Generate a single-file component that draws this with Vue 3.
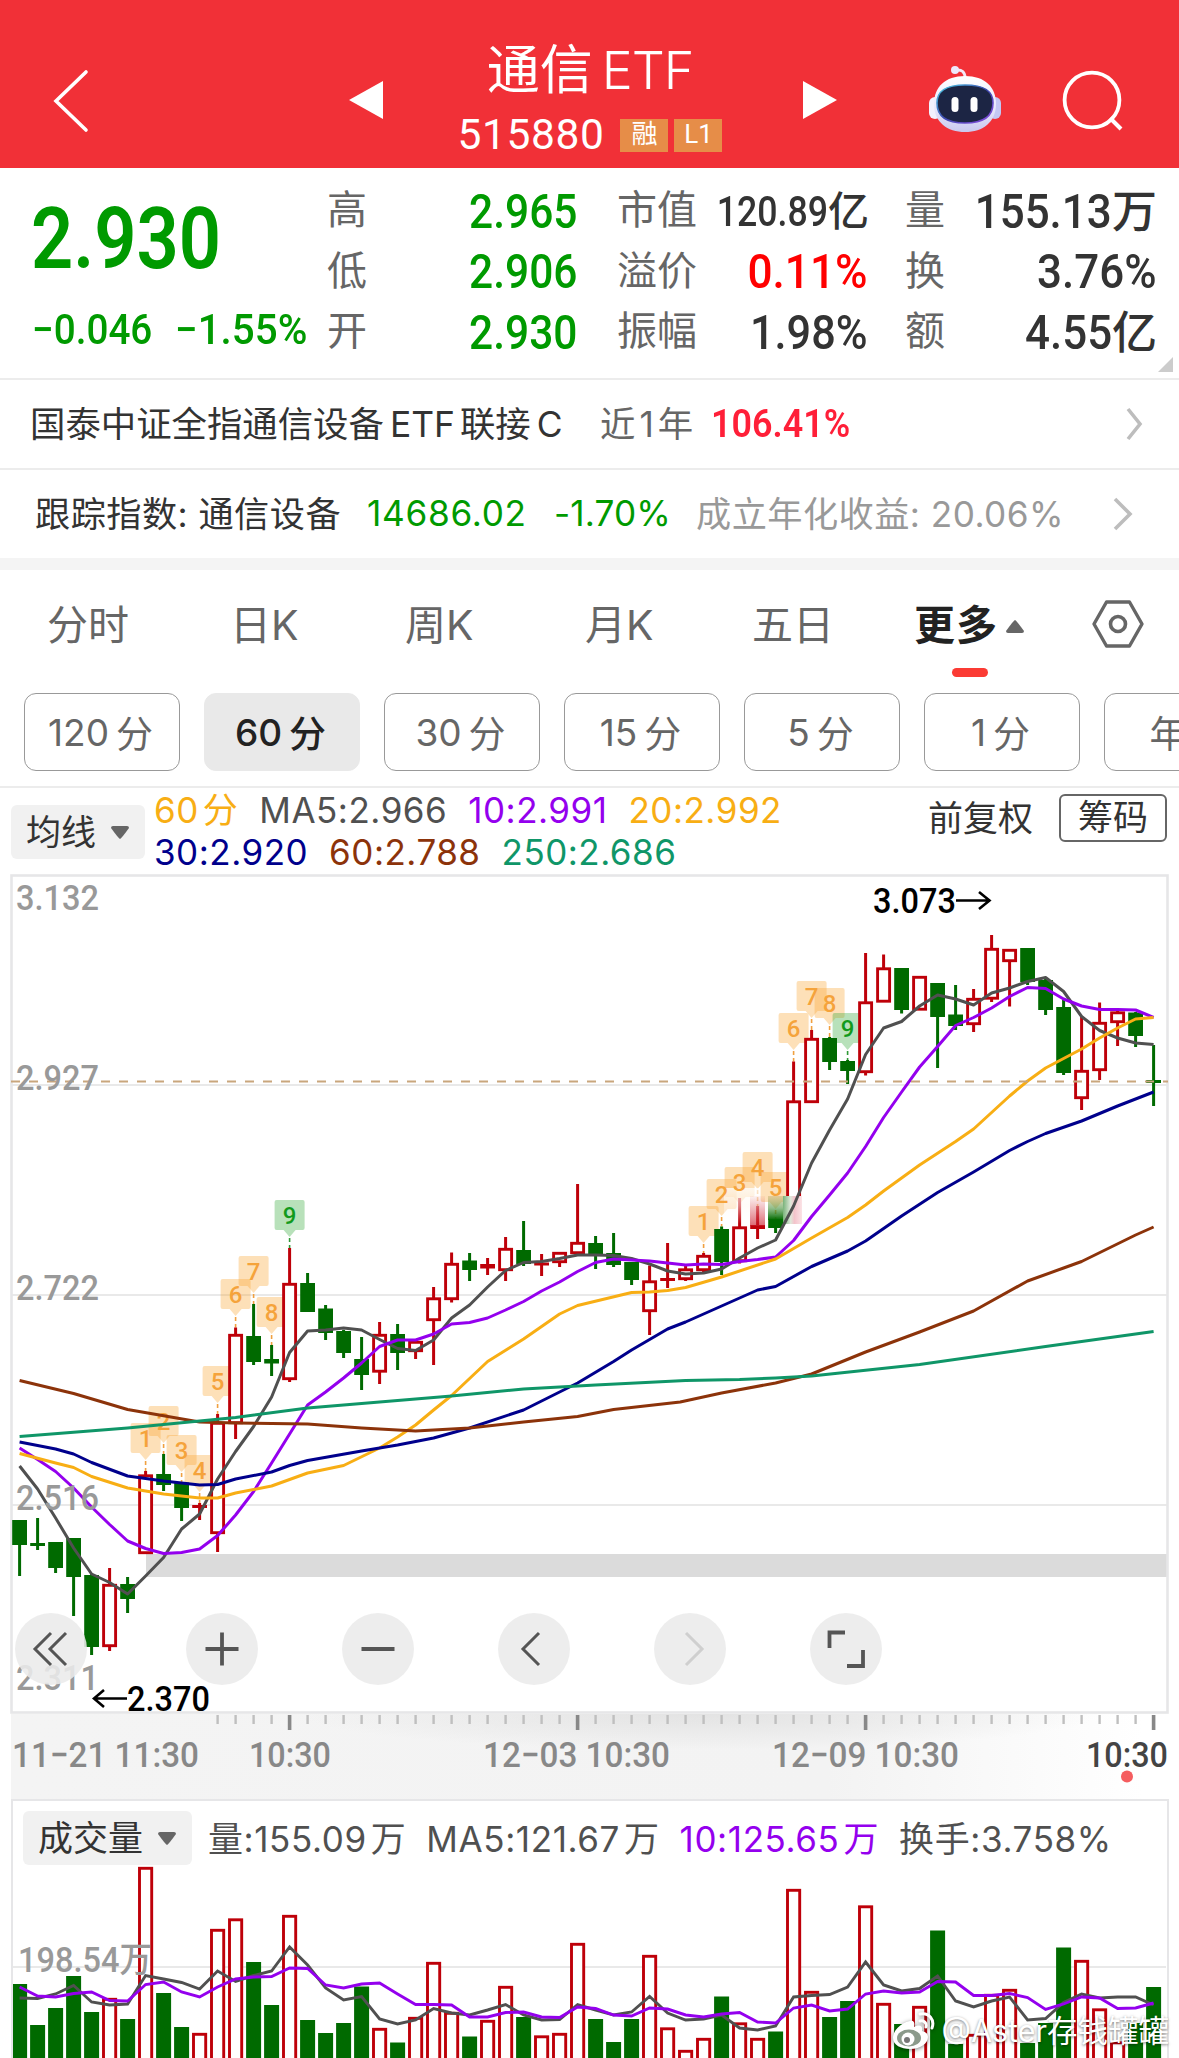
<template>
  <div class="page">
    <header class="header">
      <svg class="back" viewBox="0 0 36 64" width="36" height="64">
        <path d="M33 3 L3 32 L33 61" fill="none" stroke="#fff" stroke-width="3.6" stroke-linecap="round" />
      </svg>
      <svg class="prev" viewBox="0 0 34 38" width="34" height="38"><path d="M34 0 V38 L0 19Z" fill="#fff" /></svg>
      <div class="title">
        <div class="name">通信<span>ETF</span></div>
        <div class="code">
          <span>515880</span>
          <i class="tag">融</i>
          <i class="tag">L1</i>
        </div>
      </div>
      <svg class="next" viewBox="0 0 34 38" width="34" height="38"><path d="M0 0 V38 L34 19Z" fill="#fff" /></svg>
      <svg class="robot" viewBox="0 0 74 68" width="74" height="68">
        <defs>
          <linearGradient id="shell" x1="0" y1="0" x2="0" y2="1">
            <stop offset="0" stop-color="#ffffff" />
            <stop offset="0.6" stop-color="#e6e6fb" />
            <stop offset="1" stop-color="#c9c8ee" />
          </linearGradient>
          <linearGradient id="rim" x1="0" y1="0" x2="1" y2="1">
            <stop offset="0" stop-color="#4fd2e8" />
            <stop offset="0.5" stop-color="#3c49b0" />
            <stop offset="1" stop-color="#8b4be0" />
          </linearGradient>
        </defs>
        <rect x="1" y="32" width="12" height="22" rx="6" fill="#f2f1fd" />
        <rect x="61" y="32" width="12" height="22" rx="6" fill="#c3c7f4" />
        <path d="M28 5 Q37 4 37 13" fill="none" stroke="#f3e9f7" stroke-width="3" />
        <circle cx="27" cy="5" r="4" fill="#eee8fb" />
        <path d="M37 11 C57 11 68 22 68 39 C68 57 55 67 37 67 C19 67 6 57 6 39 C6 22 17 11 37 11Z" fill="url(#shell)" />
        <path d="M37 20 C57 20 65 26 65 38 C65 52 55 58 37 58 C19 58 9 52 9 38 C9 26 17 20 37 20Z" fill="#1c2544" stroke="url(#rim)" stroke-width="1.6" />
        <rect x="23.500" y="32" width="7" height="15" rx="3.500" fill="#fff" />
        <rect x="42.500" y="32" width="7" height="15" rx="3.500" fill="#fff" />
      </svg>
      <svg class="search" viewBox="0 0 62 62" width="62" height="62">
        <circle cx="30" cy="30" r="27.400" fill="none" stroke="#fff" stroke-width="3.800" />
        <path d="M48 48 L59 59" stroke="#fff" stroke-width="4" />
      </svg>
    </header>

    <section class="quote">
      <div class="last">
        <div class="price"><span class="din left">2.930</span></div>
        <div class="change">
          <span class="din left">−0.046</span>
          <span class="din left">−1.55%</span>
        </div>
      </div>
      <div v-for="(col, c) in quotes" :key="c" class="col" :class="'col' + c">
        <div v-for="q in col" :key="q.label" class="cell">
          <span class="label">{{ q.label }}</span>
          <span class="value" :class="q.cls"><span class="din">{{ q.value }}</span><b v-if="q.unit">{{ q.unit }}</b></span>
        </div>
      </div>
      <svg class="corner" viewBox="0 0 15 15" width="15" height="15"><path d="M15 0 V15 H0Z" fill="#ccc" /></svg>
    </section>

    <section class="link">
      <span class="fund">国泰中证全指通信设备<em>ETF</em>联接<em>C</em></span>
      <span class="near">近<em>1</em>年</span>
      <span class="rate"><span class="din left">106.41%</span></span>
      <svg class="arrow" viewBox="0 0 18 34" width="18" height="34"><path d="M2 2 L14 17 L2 32" /></svg>
    </section>

    <section class="link index">
      <span class="track">跟踪指数: 通信设备</span>
      <span class="green point">14686.02</span>
      <span class="green pct">-1.70%</span>
      <span class="since">成立年化收益: 20.06%</span>
      <svg class="arrow" viewBox="0 0 20 34" width="20" height="34"><path d="M2 2 L17 17 L2 32" /></svg>
    </section>

    <nav class="tabs">
      <span v-for="t in tabs" :key="t" class="tab">{{ t }}</span>
      <span class="tab active">更多<svg viewBox="0 0 18 13" width="18" height="13"><path d="M9 0 Q10 0 18 11 Q18 13 16 13 H2 Q0 13 0 11 Q8 0 9 0Z" fill="#666" /></svg></span>
      <svg class="gear" viewBox="0 0 52 48" width="52" height="48">
        <path d="M14.500 2 H37.500 L50 24 L37.500 46 H14.500 L2 24Z" fill="none" stroke="#666" stroke-width="3.400" stroke-linejoin="round" />
        <circle cx="26" cy="24" r="7.500" fill="none" stroke="#666" stroke-width="3.600" />
      </svg>
    </nav>

    <div class="chips">
      <span v-for="p in periods" :key="p.n + p.unit" class="chip" :class="{ on: p.n === '60' }">
        <span v-if="p.n">{{ p.n }}</span>{{ p.unit }}
      </span>
    </div>

    <section class="ma-bar">
      <div class="select">均线<svg viewBox="0 0 18 13" width="18" height="13"><path :d="caret" fill="#666" /></svg></div>
      <div class="legend">
        <div>
          <span class="orange">60<i>分</i></span>
          <span class="gray">MA5:2.966</span>
          <span class="purple">10:2.991</span>
          <span class="orange">20:2.992</span>
        </div>
        <div>
          <span class="blue">30:2.920</span>
          <span class="brown">60:2.788</span>
          <span class="teal">250:2.686</span>
        </div>
      </div>
      <span class="adjust">前复权</span>
      <span class="chouma">筹码</span>
    </section>

    <section class="kline">
      <svg viewBox="0 873 1179 926" width="1179" height="926">
        <defs>
          <linearGradient id="strip" x1="0" x2="1">
            <stop offset="0" stop-color="#f4f4f4" />
            <stop offset="0.7" stop-color="#f3f3f3" />
            <stop offset="0.97" stop-color="#fff" />
          </linearGradient>
          <radialGradient id="shade" cx="0.5" cy="0" r="0.5" gradientTransform="translate(0 0) scale(1 1.2)">
            <stop offset="0" stop-color="#dcdcdc" stop-opacity="0.7" />
            <stop offset="1" stop-color="#dcdcdc" stop-opacity="0" />
          </radialGradient>
          <linearGradient id="fade" x1="0" x2="0" y1="0" y2="1">
            <stop offset="0" stop-color="#fff" stop-opacity="0.75" />
            <stop offset="0.5" stop-color="#fff8f2" stop-opacity="0.5" />
            <stop offset="1" stop-color="#fff" stop-opacity="0" />
          </linearGradient>
          <linearGradient id="redFade" x1="0" x2="0" y1="0" y2="1">
            <stop offset="0" stop-color="#d03040" stop-opacity="0.05" />
            <stop offset="1" stop-color="#c81828" stop-opacity="0.65" />
          </linearGradient>
          <linearGradient id="greenFade" x1="0" x2="0" y1="0" y2="1">
            <stop offset="0" stop-color="#b9a860" stop-opacity="0.4" />
            <stop offset="0.5" stop-color="#4a9440" stop-opacity="0.6" />
            <stop offset="1" stop-color="#006a00" />
          </linearGradient>
          <linearGradient id="smear" x1="0" x2="1">
            <stop offset="0" stop-color="#79b37a" />
            <stop offset="0.4" stop-color="#dfe8da" />
            <stop offset="0.6" stop-color="#f3c3cb" />
            <stop offset="1" stop-color="#fbe3e6" />
          </linearGradient>
        </defs>

        <path d="M12 1085H1167M12 1295H1167M12 1505H1167" stroke="#e9e9e9" stroke-width="2" />
        <rect x="146" y="1554" width="1021" height="23" fill="#dbdbdb" />
        <rect x="11.500" y="875.500" width="1156" height="837" fill="none" stroke="#e6e6e8" stroke-width="2.600" />

        <g v-for="b in badges" :key="'b' + b.i">
          <path :d="badgePath(b)" :fill="b.n === 9 ? '#2fa836' : '#f9a32e'" fill-opacity="0.34" />
          <line :x1="x(b.i)" :x2="x(b.i)" :y1="b.y + 38" :y2="candles[b.i][3]" :stroke="b.n === 9 ? '#2f9a36' : '#f0a040'" stroke-width="1.600" stroke-dasharray="4 3" />
        </g>

        <g v-for="(c, i) in candles" :key="i">
          <line :x1="x(i)" :x2="x(i)" :y1="c[3]" :y2="c[4]" :stroke="color(c)" stroke-width="3" />
          <rect v-if="c[0] === 'r' && c[2] - c[1] > 5" :x="x(i) - 6" :y="c[1] + 1.300" width="12" :height="c[2] - c[1] - 2.600" fill="#fff" :stroke="color(c)" stroke-width="2.900" />
          <rect v-else :x="x(i) - 7.400" :y="c[1]" width="14.800" :height="c[2] - c[1]" :fill="color(c)" />
        </g>

        <rect x="724" y="1188" width="36" height="36" fill="url(#fade)" />
        <rect x="750" y="1196" width="15" height="30" fill="url(#redFade)" />
        <rect x="768" y="1196" width="15" height="24" fill="url(#greenFade)" />
        <rect x="783" y="1196" width="19" height="28" fill="url(#smear)" />

        <text v-for="b in badges" :key="'t' + b.i" :x="x(b.i)" :y="b.y + 24" class="badge-no" :fill="b.n === 9 ? '#129a1c' : '#f5a33b'">{{ b.n }}</text>

        <polyline v-for="l in lines" :key="l.color" :points="linePoints(l.pts)" fill="none" :stroke="l.color" stroke-width="3" stroke-linejoin="round" />
        <line x1="11" x2="1168" y1="1081.500" y2="1081.500" stroke="#c9a67c" stroke-width="1.800" stroke-dasharray="9 9" />

        <text v-for="a in axis" :key="a[0]" x="16" :y="a[1]" class="num" textLength="83" lengthAdjust="spacingAndGlyphs">{{ a[0] }}</text>

        <text x="873" y="912.500" class="num black" textLength="83" lengthAdjust="spacingAndGlyphs">3.073</text>
        <path d="M956 900.500H989M979 892L989.500 900.500L979 909" class="mark" />
        <text x="127" y="1711" class="num black" textLength="83" lengthAdjust="spacingAndGlyphs">2.370</text>
        <path d="M127 1698.500H95M104 1690L94 1698.500L104 1707" class="mark" />

        <rect x="11" y="1714" width="1168" height="85" fill="url(#strip)" />
        <rect x="300" y="1714" width="800" height="60" fill="url(#shade)" />
        <line v-for="i in 53" :key="'k' + i" :x1="x(i + 10)" :x2="x(i + 10)" y1="1715" :y2="isMajor(i + 10) ? 1730 : 1724" :stroke="isMajor(i + 10) ? '#888' : '#bfbfbf'" :stroke-width="isMajor(i + 10) ? 3.600 : 2.400" />
        <text v-for="t in times" :key="t.x" :x="t.x" y="1767" class="num time" :class="{ now: t.now }" :textLength="t.w" lengthAdjust="spacingAndGlyphs">{{ t.text }}</text>
        <circle cx="1127" cy="1776.500" r="6" fill="#f55d5f" />
      </svg>
      <div class="tools">
        <span class="tool first"><svg viewBox="0 0 40 40"><path d="M20 4 L4 20 L20 36M35 4 L19 20 L35 36" /></svg></span>
        <span class="tool"><svg viewBox="0 0 40 40"><path class="thick" d="M3.500 20H36.500M20 3.500V36.500" /></svg></span>
        <span class="tool"><svg viewBox="0 0 40 40"><path class="thick" d="M3.500 20H36.500" /></svg></span>
        <span class="tool"><svg viewBox="0 0 40 40"><path d="M25 4 L9 20 L25 36" /></svg></span>
        <span class="tool off"><svg viewBox="0 0 40 40"><path d="M16 4 L32 20 L16 36" /></svg></span>
        <span class="tool"><svg viewBox="0 0 40 40"><path class="thick" d="M19 3.500H3.500V19M37 21V37H21" /></svg></span>
      </div>
    </section>

    <section class="volume">
      <div class="vol-head">
        <div class="select">成交量<svg viewBox="0 0 18 13" width="18" height="13"><path :d="caret" fill="#666" /></svg></div>
        <span class="gray">量:155.09<i>万</i></span>
        <span class="gray">MA5:121.67<i>万</i></span>
        <span class="purple">10:125.65<i>万</i></span>
        <span class="gray">换手:3.758%</span>
      </div>
      <svg class="bars" viewBox="13 1866 1153 192" width="1153" height="192">
        <path d="M12 1967H1167" stroke="#e9e9e9" stroke-width="2" />
        <g v-for="(v, i) in volumes" :key="i">
          <rect v-if="volRed(i)" :x="x(i) - 6.100" :y="v + 1.300" width="12.200" height="240" fill="#fff" stroke="#be0009" stroke-width="2.900" />
          <rect v-else :x="x(i) - 7.500" :y="v" width="15" height="240" fill="#006a00" />
        </g>
        <text x="18" y="1972" class="num" textLength="134" lengthAdjust="spacingAndGlyphs">198.54万</text>
        <polyline :points="series(volMa5)" fill="none" stroke="#505050" stroke-width="2.900" />
        <polyline :points="series(volMa10)" fill="none" stroke="#9400ee" stroke-width="2.900" />
      </svg>
      <div class="watermark">
        <svg viewBox="0 0 44 38" width="44" height="38">
          <path d="M18 9 C8 11 1 19 1 26 C1 33 9 37 18 37 C29 37 36 31 36 25 C36 21 33 20 30 19 C31 14 28 12 22 15 C23 11 22 8 18 9Z" fill="#fff" />
          <ellipse cx="17" cy="26" rx="12" ry="8.500" fill="#8b9a8b" />
          <circle cx="16" cy="27" r="6.500" fill="#fff" />
          <circle cx="15" cy="28" r="3" fill="#777" />
          <path d="M28 2 C37 0 43 8 40 16M28 9 C32 8 35 11 34 15" fill="none" stroke="#fff" stroke-width="3" stroke-linecap="round" />
        </svg>
        <span>@Aster存钱罐罐</span>
      </div>
    </section>
  </div>
</template>

<script setup>
const quotes = [
  [
    { label: '高', value: '2.965', cls: 'green' },
    { label: '低', value: '2.906', cls: 'green' },
    { label: '开', value: '2.930', cls: 'green' }
  ],
  [
    { label: '市值', value: '120.89', unit: '亿', cls: 'small' },
    { label: '溢价', value: '0.11%', cls: 'red' },
    { label: '振幅', value: '1.98%' }
  ],
  [
    { label: '量', value: '155.13', unit: '万' },
    { label: '换', value: '3.76%' },
    { label: '额', value: '4.55', unit: '亿' }
  ]
]

const tabs = ['分时', '日K', '周K', '月K', '五日']

const periods = [
  { n: '120', unit: '分' },
  { n: '60', unit: '分' },
  { n: '30', unit: '分' },
  { n: '15', unit: '分' },
  { n: '5', unit: '分' },
  { n: '1', unit: '分' },
  { n: '', unit: '年K' }
]

const caret = 'M2 0H16Q18 0 18 2Q10 13 9 13Q8 13 0 2Q0 0 2 0Z'

// type, body top, body bottom, high, low
const candles = [
  ['g', 1520, 1545, 1520, 1576], ['g', 1543, 1546, 1518, 1550], ['g', 1542, 1568, 1542, 1573], ['g', 1538, 1577, 1538, 1616],
  ['g', 1575, 1647, 1574, 1655], ['r', 1584, 1647, 1568, 1651], ['g', 1584, 1599, 1577, 1613], ['r', 1474.5, 1554, 1471, 1554],
  ['g', 1474, 1485, 1454, 1491], ['g', 1482.5, 1508, 1482, 1521], ['r', 1505, 1508, 1503, 1520], ['r', 1422, 1534, 1414, 1552],
  ['r', 1334, 1424, 1327.5, 1439], ['g', 1336, 1362, 1304, 1365], ['g', 1359, 1363.5, 1345, 1376], ['r', 1283, 1380, 1248, 1382],
  ['g', 1283, 1312, 1273, 1312], ['g', 1308.5, 1333, 1305, 1340], ['g', 1331, 1353, 1330, 1358], ['g', 1359, 1375, 1337, 1390],
  ['r', 1334, 1372.5, 1322, 1384], ['g', 1334, 1353, 1324, 1370], ['r', 1341, 1352, 1341, 1359], ['r', 1297.5, 1321, 1287, 1365],
  ['r', 1263, 1300, 1252.5, 1302.5], ['g', 1260.5, 1270, 1253, 1281], ['r', 1264, 1268.5, 1258, 1275], ['r', 1248, 1271, 1237, 1281],
  ['g', 1250, 1264, 1221, 1266], ['r', 1262.5, 1265.5, 1254, 1276], ['r', 1252, 1263, 1252, 1267], ['r', 1242, 1254, 1184, 1254],
  ['g', 1243, 1254, 1236, 1269], ['g', 1253, 1265, 1233, 1267], ['g', 1262, 1280, 1262, 1285], ['r', 1280.5, 1312, 1265.5, 1335],
  ['r', 1278, 1281, 1243, 1288], ['r', 1268.5, 1280, 1266, 1281], ['r', 1255, 1271, 1253, 1272], ['g', 1229, 1262, 1226.5, 1275],
  ['r', 1226.5, 1262, 1198, 1263.5], ['r', 1225, 1229, 1206, 1239], ['g', 1219, 1228, 1219, 1233], ['r', 1100.5, 1223, 1061.5, 1200],
  ['r', 1038, 1103, 1030, 1103], ['g', 1038, 1062, 1037, 1070], ['g', 1061, 1071, 1060, 1084], ['r', 1001.5, 1073, 953, 1075.5],
  ['r', 967.5, 1002.5, 954.5, 1002], ['g', 968, 1010, 968, 1013.5], ['r', 976, 1010.5, 976, 1010], ['g', 983, 1017, 983, 1068],
  ['g', 1014.5, 1026, 985, 1030], ['r', 998, 1025, 989, 1032], ['r', 948, 999.5, 935, 1002], ['r', 949, 962, 949, 1006.5],
  ['g', 948, 982, 948, 985], ['g', 980, 1010, 978, 1015], ['g', 1007, 1073, 1000, 1075], ['r', 1070, 1099, 1016, 1110],
  ['r', 1022, 1071, 1002.5, 1080], ['r', 1011.5, 1023, 1010, 1046], ['g', 1012.5, 1036, 1012, 1047], ['g', 1080, 1083, 1045, 1106]
]

const badges = [
  { i: 7, n: 1, y: 1423 }, { i: 8, n: 2, y: 1406 }, { i: 9, n: 3, y: 1435 }, { i: 10, n: 4, y: 1455 },
  { i: 11, n: 5, y: 1366 }, { i: 12, n: 6, y: 1279 }, { i: 13, n: 7, y: 1256 }, { i: 14, n: 8, y: 1297 },
  { i: 15, n: 9, y: 1200 },
  { i: 38, n: 1, y: 1206 }, { i: 39, n: 2, y: 1179 }, { i: 40, n: 3, y: 1167 }, { i: 41, n: 4, y: 1152 },
  { i: 42, n: 5, y: 1172 }, { i: 43, n: 6, y: 1013 }, { i: 44, n: 7, y: 981 }, { i: 45, n: 8, y: 988 },
  { i: 46, n: 9, y: 1013 }
]

const ma5 = [
  1466, 1489, 1518, 1548, 1574, 1582.5, 1594, 1576, 1557.5, 1529, 1514, 1479, 1451.5, 1426.5, 1397, 1352.5,
  1331, 1330, 1328, 1330, 1339.5, 1348.5, 1350.5, 1340, 1318, 1305, 1287, 1270.5, 1262.5, 1261.5, 1258.5, 1255,
  1255, 1255.5, 1258.5, 1264, 1271, 1274, 1273, 1269, 1258, 1248, 1240, 1206, 1163, 1130, 1099, 1054.5,
  1028, 1021.5, 1006, 995, 999, 1005, 993, 988, 981.5, 977.5, 991.5, 1016.5, 1030.5, 1038, 1043, 1044.5
]

const ma10 = [
  1448, 1459.5, 1471.5, 1488, 1507, 1524.5, 1541, 1548.5, 1553.5, 1552.5, 1549, 1535.5, 1515, 1491.5, 1463, 1434,
  1405, 1392, 1378, 1363, 1346.5, 1340, 1340, 1334, 1324, 1322.5, 1318, 1310, 1301.5, 1291, 1282, 1271.5,
  1262.5, 1259, 1260, 1261, 1263, 1265, 1264, 1264.5, 1261.5, 1259.5, 1257, 1240.5, 1216.5, 1195, 1173, 1146.5,
  1117.5, 1092, 1067, 1046.5, 1025.5, 1017.5, 1008, 996.5, 987.5, 988.5, 999, 1006, 1009.5, 1009.5, 1010, 1017.5
]

const lines = [
  { color: '#505050', pts: ma5.map((y, i) => [i, y]) },
  { color: '#9400ee', pts: ma10.map((y, i) => [i, y]) },
  {
    color: '#f8ae14',
    pts: [[0, 1453.5], [2, 1463], [3, 1467.5], [4, 1476.5], [6, 1488], [8, 1494], [10, 1498], [11, 1498], [12, 1493], [14, 1486],
      [16, 1473], [18, 1465.5], [20, 1448], [21, 1437], [22, 1425], [23, 1410], [24, 1395.5], [26, 1361.5], [28, 1339], [30, 1314],
      [31, 1305.5], [34, 1292.5], [35, 1292], [36, 1290.5], [37, 1287.5], [39, 1277], [42, 1259], [44, 1238], [46, 1217.5], [47, 1205],
      [48, 1191], [50, 1165], [52, 1141.5], [53, 1129], [55, 1096], [56, 1081], [57, 1068], [59, 1049], [60, 1038], [61, 1028],
      [62, 1019], [63, 1017.5]]
  },
  {
    color: '#00008c',
    pts: [[0, 1442], [2, 1449], [3, 1454], [4, 1462.5], [6, 1476], [8, 1481], [10, 1485], [11, 1484.5], [12, 1479], [14, 1472],
      [15, 1465.5], [16, 1460.5], [19, 1451], [21, 1445], [23, 1438], [25, 1428], [28, 1410], [29, 1401], [31, 1383], [33, 1361.5],
      [34, 1350], [36, 1329], [37, 1322], [39, 1306], [41, 1290], [42, 1286.5], [44, 1266.5], [46, 1251], [47, 1241], [49, 1216],
      [51, 1192.5], [53, 1172], [55, 1150.5], [56, 1141.5], [57, 1133.5], [59, 1121], [61, 1106], [63, 1092]]
  },
  {
    color: '#8c330a',
    pts: [[0, 1380.5], [3, 1393.5], [6, 1409.5], [10, 1422], [12, 1423], [16, 1424], [19, 1428], [22, 1431], [25, 1428], [28, 1422],
      [31, 1416.5], [33, 1409.5], [36.7, 1402], [39, 1393], [42, 1383], [44, 1374], [47, 1352], [50, 1332], [53, 1311], [56, 1281],
      [58, 1268], [59, 1261.5], [62, 1235], [63, 1227]]
  },
  {
    color: '#0f9668',
    pts: [[0, 1436.5], [6, 1428], [12, 1417.5], [16, 1408], [21, 1400.5], [24, 1396], [28, 1389], [32, 1385], [37, 1380.5], [40, 1379.5],
      [42, 1378], [44, 1376], [50, 1364.5], [57, 1346.5], [63, 1331.5]]
  }
]

const axis = [['3.132', 910], ['2.927', 1090], ['2.722', 1300], ['2.516', 1510], ['2.311', 1690]]

const times = [
  { text: '11−21 11:30', x: 12, w: 187 },
  { text: '10:30', x: 249, w: 82 },
  { text: '12−03 10:30', x: 483, w: 187 },
  { text: '12−09 10:30', x: 772, w: 187 },
  { text: '10:30', x: 1086, w: 82, now: true }
]

const volumes = [
  1984, 2025, 2008, 1976, 2012, 1998, 2019, 1867, 1993, 2027, 2033, 1929, 1918.5, 1962, 2005, 1915,
  2020, 2033, 2023, 1986.5, 2028, 2042.5, 2017, 1962, 2012, 2036.5, 2020, 1986, 2017, 2035.5, 2033, 1943,
  2019, 2042, 2019, 1955, 2027.5, 2050, 2038, 1996.5, 2022.5, 2038, 2031.5, 1889, 1991, 2017, 2001, 1905.5,
  2003, 2024, 2006, 1930.5, 2044, 2034, 1994, 1989, 2043, 2023, 1947.5, 1960, 2008.5, 2041.5, 2023, 1987
]

const volMa5 = [
  1998, 1998.5, 1994, 1985.5, 2002, 2005, 2004, 1975.5, 1979, 1982.5, 1989, 1971, 1981.5, 1975.5, 1971, 1947,
  1965, 1988, 2000, 1996.5, 2019, 2024, 2020, 2008.5, 2013, 2015, 2010, 2004.5, 2015, 2020, 2019.5, 2004.5,
  2010, 2015, 2012, 1996.5, 2013, 2020, 2019, 2015, 2028, 2030, 2026, 1997, 1995.5, 1994.5, 1987, 1962,
  1985, 1991, 1988.5, 1976, 2001, 2007, 2001, 1997, 2020, 2018.5, 2002.5, 1994, 1998, 1997, 1997, 2005
]

const volMa10 = [
  1987, 1996, 1997, 1993.5, 1992, 2000.5, 2001, 1984.5, 1982, 1992, 1997, 1987, 1979, 1977, 1976.5, 1968,
  1968.5, 1985, 1988, 1984, 1983, 1994, 2004.5, 2004.5, 2005, 2017, 2017, 2012.5, 2012, 2017, 2017.5, 2007,
  2008.5, 2015, 2016, 2008, 2009, 2015, 2017, 2014, 2012.5, 2022, 2023, 2008, 2005, 2011, 2009, 1994,
  1991, 1993, 1992, 1981.5, 1982, 1995.5, 1995.5, 1993.5, 1997.5, 2009.5, 2004, 1997, 1998, 2008.5, 2008, 2003
]

const x = (i) => 19.6 + i * 18
const color = (c) => (c[0] === 'r' ? '#be0009' : '#006a00')
const volRed = (i) => candles[i][0] === 'r'
const isMajor = (i) => i % 16 === 15
const linePoints = (pts) => pts.map(([i, y]) => `${x(i)},${y}`).join(' ')
const series = (ys) => linePoints(ys.map((y, i) => [i, y]))

const badgePath = ({ i, y }) => {
  const l = x(i) - 15
  return `M${l + 2} ${y}h26q2 0 2 2v26q0 2 -2 2h-7l-6 7l-6 -7h-7q-2 0 -2 -2v-26q0 -2 2 -2z`
}
</script>

<style>
body {
  background: #fff;
}
</style>

<style scoped>
.page {
  width: 1179px;
  height: 2058px;
  overflow: hidden;
  font-family: Inter, "Noto Sans CJK SC", sans-serif;
  color: #333;
}

i,
em {
  font-style: normal;
}

.header {
  height: 168px;
  background: #f13037;
  display: flex;
  align-items: center;
}

.back {
  margin: 34px 0 0 53px;
}

.prev {
  margin: 32px 0 0 260px;
}

.title {
  width: 320px;
  margin: 30px 53px 0 47px;
  color: #fff;
  text-align: center;
}

.name {
  font-size: 53px;
  line-height: 70px;
}

.name span {
  margin-left: 9px;
  font-size: 52px;
  letter-spacing: -1px;
  font-weight: 350;
}

.code {
  display: flex;
  align-items: center;
  justify-content: center;
  height: 58px;
  font-family: Roboto, sans-serif;
  font-size: 42.500px;
}

.code span {
  margin-right: 10px;
  font-weight: 400;
  letter-spacing: 0.600px;
}

.tag {
  width: 48px;
  height: 33px;
  margin: 2px 0 0 6px;
  background: #e68d48;
  font-family: Roboto, "Noto Sans CJK SC", sans-serif;
  font-size: 26px;
  line-height: 30px;
}

.next {
  margin-top: 32px;
}

.robot {
  margin: 30px 0 0 91px;
}

.search {
  margin: 34px 0 0 60px;
}

.din {
  display: inline-block;
  font-family: Roboto, sans-serif;
  font-weight: 500;
  transform: scaleX(0.9);
  transform-origin: right center;
}

.din.left {
  transform-origin: left center;
}

.green {
  color: #009a00;
}

.quote {
  position: relative;
  height: 210px;
  border-bottom: 2px solid #ececec;
  display: flex;
  box-sizing: content-box;
}

.last {
  width: 327px;
  color: #009a00;
}

.price {
  height: 98px;
  margin: 20px 0 0 31px;
  font-size: 86px;
  line-height: 98px;
}

.price .din {
  font-weight: 600;
  transform: scaleX(0.86);
}

.change {
  display: flex;
  margin-left: 32px;
  font-size: 42px;
  line-height: 88px;
}

.change .din {
  width: 143px;
  white-space: nowrap;
  transform: scaleX(0.92);
}

.change .din:last-child {
  transform: scaleX(0.96);
}

.col {
  padding-top: 13px;
}

.col0 {
  width: 250px;
}

.col0 .din {
  transform: scaleX(0.885);
}

.col1 {
  width: 251px;
  margin-left: 40px;
}

.col2 {
  width: 252px;
  margin-left: 37px;
}

.col2 .din {
  transform: scaleX(0.915);
}

.cell {
  display: flex;
  justify-content: space-between;
  align-items: center;
  height: 60.500px;
  white-space: nowrap;
}

.label {
  color: #666;
  font-size: 40px;
  line-height: 56px;
  padding-bottom: 2px;
}

.value {
  font-size: 48px;
  line-height: 60px;
  color: #333;
}

.value.green {
  color: #009a00;
}

.value.red {
  color: #ff0000;
}

.value.red .din {
  transform: scaleX(0.92);
}

.value b {
  font-size: 45px;
  font-weight: 500;
  line-height: 50px;
}

.value.small {
  font-size: 42px;
}

.value.small .din {
  transform: scaleX(0.85);
}

.value.small b {
  font-size: 41px;
}

.corner {
  position: absolute;
  right: 6px;
  bottom: 6px;
}

.link {
  height: 88px;
  padding-left: 30px;
  border-bottom: 2px solid #ececec;
  display: flex;
  align-items: center;
  font-size: 35.400px;
  white-space: nowrap;
}

.fund,
.near,
.track,
.since {
  padding-bottom: 5px;
}

.fund {
  width: 570px;
}

.fund em {
  margin: 0 5px 0 6px;
}

.near {
  width: 111px;
  color: #666;
}

.near em {
  margin: 0 4px;
}

.rate {
  flex: 1;
  padding-bottom: 2px;
  color: #ff1f38;
  font-size: 38px;
}

.rate .din {
  font-weight: 600;
  transform: scaleX(0.945);
}

.arrow {
  margin-right: 35px;
  fill: none;
  stroke: #bdbdbd;
  stroke-width: 3.600px;
}

.index {
  border-bottom: 12px solid #f4f4f4;
  padding-left: 35px;
  font-size: 35.200px;
  letter-spacing: 0.450px;
}

.index .arrow {
  margin-right: 46px;
}

.track {
  width: 332px;
}

.point {
  width: 187px;
  padding-bottom: 2px;
  letter-spacing: 0.700px;
}

.pct {
  width: 142px;
  padding-bottom: 2px;
  letter-spacing: 0.100px;
}

.since {
  flex: 1;
  color: #999;
}

.tabs {
  height: 110px;
  display: flex;
  align-items: center;
  padding-left: 47px;
  color: #666;
  font-size: 41px;
}

.tab {
  width: 187px;
  margin-top: -6px;
  white-space: nowrap;
}

.tab:first-child {
  width: 183px;
}

.tab:nth-child(2) {
  width: 175px;
}

.tab:nth-child(3) {
  width: 180px;
}

.tab:nth-child(4) {
  width: 167px;
}

.tab:nth-child(5) {
  width: 162px;
}

.tab.active {
  position: relative;
  width: 178px;
  color: #222;
  font-weight: 700;
  letter-spacing: 1px;
}

.tab.active svg {
  margin: 0 0 5px 8px;
  vertical-align: middle;
}

.tab.active::after {
  content: "";
  position: absolute;
  left: 38px;
  bottom: -25px;
  width: 36px;
  height: 9px;
  border-radius: 5px;
  background: #fb3b34;
}

.gear {
  margin-top: -2px;
}

.chips {
  display: flex;
  gap: 24px;
  height: 108px;
  padding: 13px 0 0 24px;
  box-sizing: border-box;
  border-bottom: 2px solid #ececec;
  overflow: hidden;
}

.chip {
  flex: none;
  box-sizing: border-box;
  width: 156px;
  height: 78px;
  padding-right: 3px;
  border: 1.500px solid #999;
  border-radius: 12px;
  display: flex;
  align-items: center;
  justify-content: center;
  gap: 7px;
  color: #666;
  font-size: 37px;
}

.chip.on {
  border-color: #e9e9e9;
  background: #e9e9e9;
  color: #222;
  font-weight: 500;
}

.ma-bar {
  height: 85px;
  display: flex;
  align-items: flex-start;
  font-size: 35px;
  white-space: nowrap;
}

.select {
  width: 134px;
  height: 54px;
  margin: 17px 0 0 11px;
  padding-left: 15px;
  box-sizing: border-box;
  border-radius: 6px;
  background: #f1f1f1;
  font-size: 35px;
  line-height: 54px;
  letter-spacing: 0;
}

.select svg {
  margin: 0 0 6px 15px;
  vertical-align: middle;
}

.legend {
  width: 784px;
  margin: 1px 0 0 9px;
  letter-spacing: 0.500px;
}

.legend div {
  display: flex;
  gap: 21px;
  height: 42px;
  line-height: 42px;
}

.legend i,
.vol-head i {
  margin-left: 4px;
}

.orange {
  color: #f8ae14;
}

.gray {
  color: #505050;
}

.purple {
  color: #9400ee;
}

.blue {
  color: #00008c;
}

.brown {
  color: #8c330a;
}

.teal {
  color: #0f9668;
}

.adjust {
  width: 122px;
  margin-left: -10px;
  margin-top: 9px;
  line-height: 42px;
}

.chouma {
  box-sizing: border-box;
  width: 108px;
  height: 48px;
  margin: 6px 0 0 9px;
  border: 2px solid #666;
  border-radius: 6px;
  line-height: 42px;
  text-align: center;
}

.kline {
  position: relative;
  height: 926px;
}

.kline > svg {
  display: block;
}

.num {
  font-family: Roboto, "Noto Sans CJK SC", sans-serif;
  font-size: 35.500px;
  font-weight: 500;
  fill: #999;
}

.num.black {
  fill: #000;
}

.num.time {
  fill: #888;
}

.num.now {
  fill: #444;
}

.mark {
  fill: none;
  stroke: #000;
  stroke-width: 2.600px;
}

.badge-no {
  font-family: Roboto, sans-serif;
  font-size: 24px;
  font-weight: 500;
  text-anchor: middle;
}

.tools {
  position: absolute;
  left: 15px;
  top: 740px;
  display: flex;
  gap: 84px;
}

.tool {
  width: 72px;
  height: 72px;
  border-radius: 50%;
  background: rgba(235, 235, 235, 0.88);
  display: flex;
  align-items: center;
  justify-content: center;
}

.tool.first {
  margin-right: 15px;
}

.tool svg {
  width: 40px;
  height: 40px;
  fill: none;
  stroke: #555;
  stroke-width: 3px;
}

.tool .thick {
  stroke-width: 3.800px;
}

.tool.off svg {
  stroke: #cfcfcf;
}

.volume {
  position: relative;
  box-sizing: border-box;
  width: 1158px;
  height: 259px;
  margin-left: 11px;
  border: 2px solid #e6e6e8;
  border-bottom: 0;
}

.vol-head {
  display: flex;
  gap: 20px;
  height: 65px;
  font-size: 35px;
  line-height: 76px;
  letter-spacing: 0.600px;
  white-space: nowrap;
}

.vol-head .select {
  width: 169px;
  margin: 10px -4px 0 10px;
  padding-left: 15px;
}

.bars {
  display: block;
}

.watermark {
  position: absolute;
  right: -2px;
  bottom: 7px;
  display: flex;
  align-items: center;
  gap: 5px;
  color: #fff;
  font-size: 30.500px;
  line-height: 40px;
  text-shadow: 0 1px 3px rgba(0, 0, 0, 0.55);
}

.watermark svg {
  filter: drop-shadow(0 1px 2px rgba(0, 0, 0, 0.5));
}
</style>
